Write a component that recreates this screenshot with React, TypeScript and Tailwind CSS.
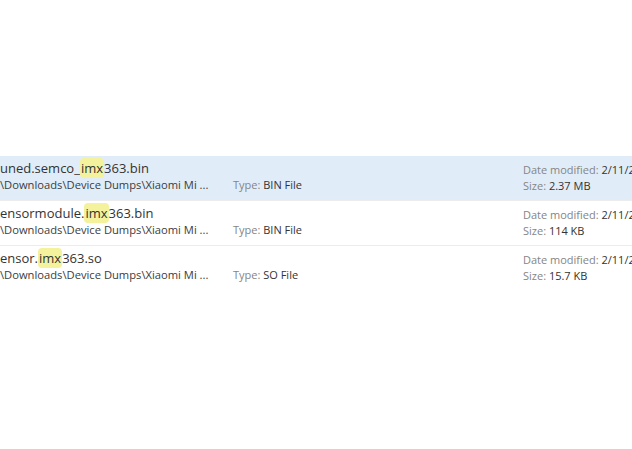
import React from "react";

type Row = {
  pre: string;
  hit: string;
  post: string;
  type: string;
  size: string;
  selected?: boolean;
};

const rows: Row[] = [
  { pre: "uned.semco_", hit: "imx", post: "363.bin", type: "BIN File", size: "2.37 MB", selected: true },
  { pre: "ensormodule.", hit: "imx", post: "363.bin", type: "BIN File", size: "114 KB" },
  { pre: "ensor.", hit: "imx", post: "363.so", type: "SO File", size: "15.7 KB" },
];

const font = { fontFamily: '"Open Sans", "Noto Sans", sans-serif' };

const ResultRow: React.FC<{ row: Row; last: boolean }> = ({ row, last }) => (
  <div
    className={`flex h-[45px] pt-[3px] whitespace-nowrap overflow-hidden ${
      row.selected ? "bg-[#e0edf9]" : "bg-white"
    } ${last ? "" : "border-b border-[#ececec]"}`}
  >
    {/* Name + path */}
    <div className="w-[233px] shrink-0 flex flex-col">
      <div className="text-[13px] leading-[18px] text-[#333]">
        {row.pre}
        <span className="bg-[#f4f29c] rounded-[4px] px-[1px] py-[1px]">{row.hit}</span>
        {row.post}
      </div>
      <div className="text-[11.2px] leading-[16px] text-[#3c3c3c]">
        \Downloads\Device Dumps\Xiaomi Mi ...
      </div>
    </div>

    {/* Type */}
    <div className="w-[290px] shrink-0 flex flex-col">
      <div className="h-[18px]" />
      <div className="text-[11px] leading-[16px]">
        <span className="text-[#858585]">Type: </span>
        <span className="text-[#333]">{row.type}</span>
      </div>
    </div>

    {/* Details */}
    <div className="flex flex-col pt-[3px] text-[11px] leading-[16px]">
      <div>
        <span className="text-[#858585]">Date modified: </span>
        <span className="text-[#333]">2/11/2</span>
      </div>
      <div>
        <span className="text-[#858585]">Size: </span>
        <span className="text-[#333]">{row.size}</span>
      </div>
    </div>
  </div>
);

export default function App() {
  return (
    <div className="w-[632px] h-[449px] bg-white overflow-hidden pt-[156px]" style={font}>
      {rows.map((r, i) => (
        <ResultRow key={i} row={r} last={i === rows.length - 1} />
      ))}
    </div>
  );
}
